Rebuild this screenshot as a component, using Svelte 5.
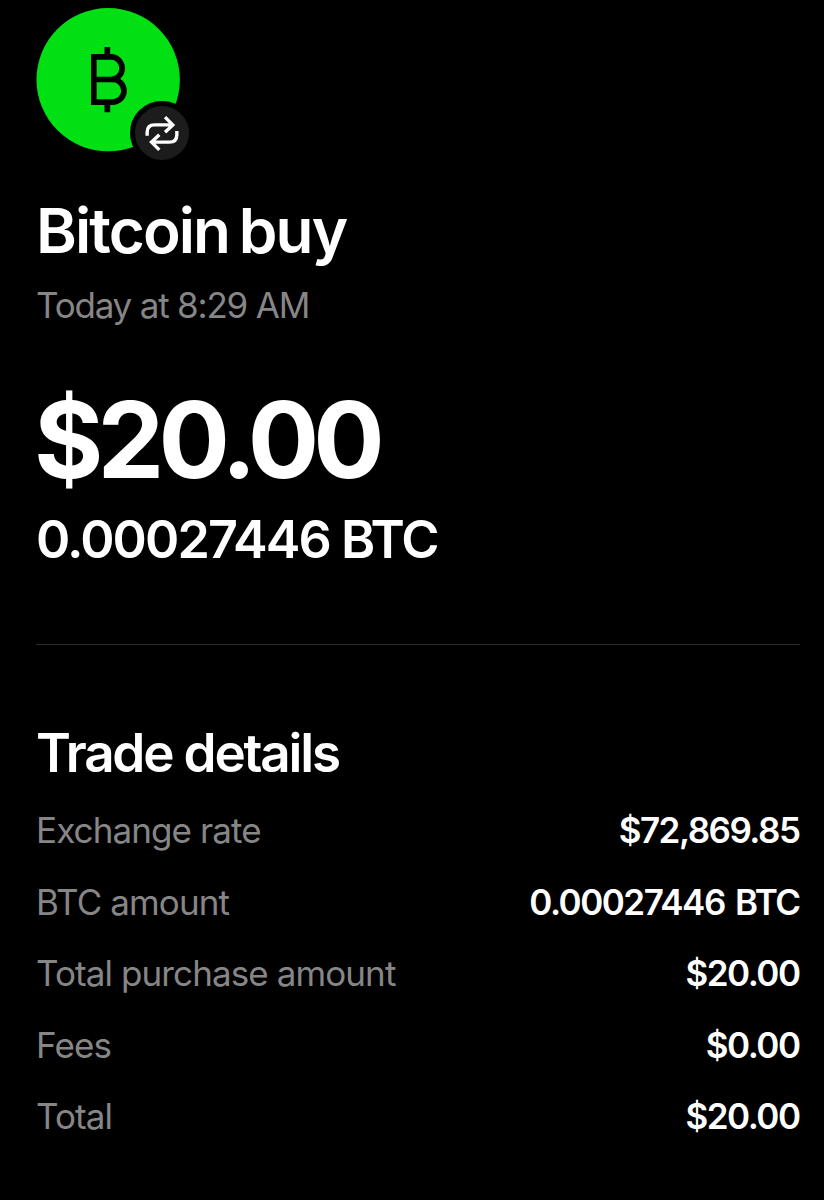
<script lang="ts">
  type Detail = { label: string; value: string };

  const trade = {
    title: 'Bitcoin buy',
    time: 'Today at 8:29 AM',
    fiat: '$20.00',
    btc: '0.00027446 BTC'
  };

  const details: Detail[] = [
    { label: 'Exchange rate', value: '$72,869.85' },
    { label: 'BTC amount', value: trade.btc },
    { label: 'Total purchase amount', value: trade.fiat },
    { label: 'Fees', value: '$0.00' },
    { label: 'Total', value: trade.fiat }
  ];
</script>

<main class="receipt">
  <div class="avatar">
    <svg class="coin" viewBox="48 24 432 432" fill="none" stroke="#000" stroke-width="17" aria-hidden="true">
      <circle cx="264.5" cy="239" r="215" fill="#00e013" stroke="none" />
      <path d="M221.5 238.5H272.5A34 34 0 0 0 272.5 170.5H221.5V306.5H278A34 34 0 0 0 278 238.5H272M262 141V171M262 306V337" />
    </svg>
    <div class="badge">
      <svg viewBox="30 34 160 160" fill="none" stroke="#fff" stroke-width="10" aria-hidden="true">
        <path d="M66 122V112Q66 90 88 90H141M119 67L142 90L119 112" />
        <path d="M154 108V119Q154 141 132 141H79M102 119L79 141L102 164" />
      </svg>
    </div>
  </div>

  <h1>{trade.title}</h1>
  <p class="time">{trade.time}</p>
  <p class="fiat">{trade.fiat}</p>
  <p class="btc">{trade.btc}</p>

  <hr />

  <h2>Trade details</h2>
  <dl>
    {#each details as { label, value }}
      <div class="row">
        <dt>{label}</dt>
        <dd>{value}</dd>
      </div>
    {/each}
  </dl>
</main>

<style>
  :global(body) { margin: 0; background: #000; }
  .receipt {
    box-sizing: border-box;
    height: 1200px;
    padding: 8px 24px 0 36px;
    overflow: hidden;
    background: #000;
    color: #fff;
    font-family: Inter, sans-serif;
    white-space: nowrap;
  }
  h1, h2, p, dl, dd { margin: 0; }

  .avatar { position: relative; width: 144px; height: 144px; }
  .coin { display: block; width: 100%; height: 100%; }
  .badge { position: absolute; left: 94px; top: 93px; width: 54px; height: 54px; border: 5px solid #000; border-radius: 50%; background: #1c1c1c; }
  .badge svg { display: block; width: 100%; height: 100%; }

  h1 { margin-top: 41px; font-size: 62px; line-height: 76px; font-weight: 600; letter-spacing: -1.9px; word-spacing: -4px; }
  .time { margin-top: 14px; font-size: 35px; line-height: 44px; color: #868686; letter-spacing: -1.2px; }
  .fiat { margin: 53px 0 0 -2px; font-size: 106px; line-height: 120px; font-weight: 700; letter-spacing: -5.8px; }
  .btc { margin-top: 10px; font-size: 52px; line-height: 60px; font-weight: 600; letter-spacing: -1.9px; }

  hr { height: 1px; margin: 74px 0 0; border: 0; background: #2b2b2b; }

  h2 { margin-top: 76px; font-size: 53px; line-height: 64px; font-weight: 600; letter-spacing: -2.2px; }
  dl { margin-top: 9.5px; }
  .row { display: flex; justify-content: space-between; align-items: center; height: 71.5px; font-size: 35px; line-height: 44px; }
  dt { color: #868686; letter-spacing: -0.9px; }
  dd { padding-right: 0.5px; font-weight: 600; letter-spacing: -1.5px; word-spacing: 3px; }
</style>
